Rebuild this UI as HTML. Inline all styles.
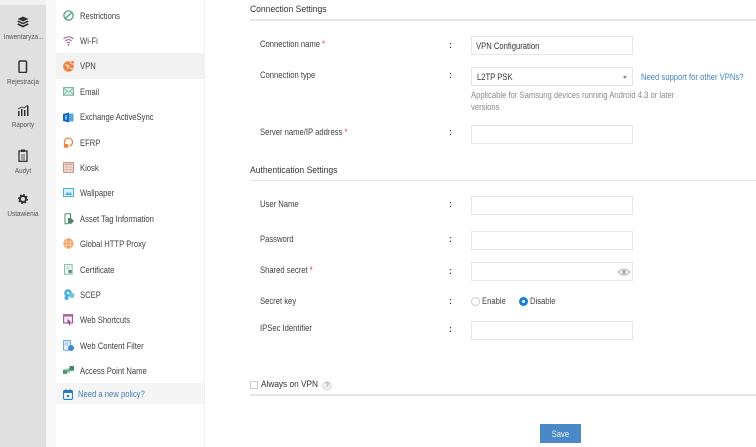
<!DOCTYPE html>
<html><head><meta charset="utf-8"><style>
html,body{margin:0;padding:0;background:#fff}
#p{position:relative;width:756px;height:447px;overflow:hidden;background:#fff;font-family:"Liberation Sans",sans-serif;color:#444;font-size:9px}
#p div,#p svg{position:absolute}
#p svg{filter:blur(.3px)}
.t{white-space:nowrap;line-height:12px;filter:blur(.3px);transform:scaleX(.85);transform-origin:0 50%}
.s{width:46px;left:0;text-align:center;font-size:7.600px;color:#555;line-height:10px;white-space:nowrap;filter:blur(.3px);transform:scaleX(.84)}
.m{left:80px;color:#3f3f3f}
.l{left:260px;color:#3f3f3f}
.c{left:449px;color:#444;font-weight:bold;transform:none}
.i{left:471px;width:160px;height:17px;border:1px solid #e6e6e6;background:#fff}
.h{left:250px;color:#333;font-size:9.500px;transform:scaleX(.9)}
.r{color:#e33}
.hr{left:250px;width:506px;height:1px;background:#e6e6e6}
</style></head><body><div id="p">
<div style="left:0;top:0;width:46px;height:447px;background:#e0e0e0"></div>
<div style="left:0;top:0;width:46px;height:5px;background:#f1f1f1"></div>
<div style="left:46px;top:0;width:10px;height:447px;background:#f8f8f8"></div>
<div style="left:204px;top:0;width:1px;height:447px;background:#efefef"></div>
<div style="left:56px;top:53px;width:148px;height:26px;background:#f2f2f2"></div>
<div style="left:56px;top:383px;width:148px;height:21px;background:#f5f5f5"></div>

<svg style="left:17px;top:16px" width="12" height="12" viewBox="0 0 12 12"><path d="M6 .5 11.500 3 6 5.500 .5 3Z M1.200 4.500 6 6.700l4.800-2.200 1 1.300L6 8.400.2 5.800Z M1.200 7.300 6 9.500l4.800-2.200 1 1.300L6 11.500.2 8.600Z" fill="#333"/></svg>
<div class="s" style="top:32px">Inwentaryza...</div>
<svg style="left:18px;top:60px" width="10" height="13" viewBox="0 0 10 13"><rect x="1" y="1" width="7.500" height="11.500" rx="1.200" fill="none" stroke="#333" stroke-width="1.500"/></svg>
<div class="s" style="top:77px">Rejestracja</div>
<svg style="left:17px;top:105px" width="12" height="11" viewBox="0 0 12 11"><path d="M1 11V6h1.500v5ZM4 11V4h1.500v7ZM7 11V5h1.500v6ZM10 11V1h1.500v10Z" fill="#333"/><path d="M1 4 5 2l2 1 4-3" fill="none" stroke="#333" stroke-width=".8"/></svg>
<div class="s" style="top:120px">Raporty</div>
<svg style="left:18px;top:149px" width="10" height="13" viewBox="0 0 10 13"><rect x="1" y="2" width="8" height="10.300" fill="none" stroke="#333" stroke-width="1.300"/><rect x="3" y=".5" width="4" height="2.500" fill="#333"/><path d="M3 6h4M3 8h4M3 10h4" stroke="#333" stroke-width=".8"/></svg>
<div class="s" style="top:166px">Audyt</div>
<svg style="left:18px;top:194px" width="10" height="10" viewBox="0 0 10 10"><circle cx="5" cy="5" r="3" fill="none" stroke="#333" stroke-width="2"/><circle cx="5" cy="5" r="4.400" fill="none" stroke="#333" stroke-width="1.200" stroke-dasharray="1.700 1.760"/></svg>
<div class="s" style="top:209px">Ustawienia</div>

<svg style="left:63px;top:10px" width="11" height="11" viewBox="0 0 11 11"><circle cx="5.500" cy="5.500" r="4.600" fill="none" stroke="#4fa27c" stroke-width="1.300"/><path d="M2.500 8.500 8.500 2.500" stroke="#4fa27c" stroke-width="1.300"/></svg>
<div class="t m" style="top:10px">Restrictions</div>
<svg style="left:63px;top:36px" width="11" height="10" viewBox="0 0 11 10"><path d="M.5 3a7 7 0 0 1 10 0M2.300 5a4.500 4.500 0 0 1 6.400 0M4 7a2.200 2.200 0 0 1 3 0" fill="none" stroke="#9a5a96" stroke-width="1"/><circle cx="5.500" cy="8.800" r=".9" fill="#9a5a96"/></svg>
<div class="t m" style="top:35px">Wi-Fi</div>
<svg style="left:63px;top:60px" width="12" height="12" viewBox="0 0 12 12"><circle cx="5.500" cy="6.500" r="5.300" fill="#ee8344"/><path d="M2.500 4.500 5.500 6 4.500 8.500M7.500 8l2 1" stroke="#fff" stroke-width="1.100" fill="none"/><circle cx="9.500" cy="2.300" r="1.800" fill="#ee8344" stroke="#fff" stroke-width=".6"/></svg>
<div class="t m" style="top:60px">VPN</div>
<svg style="left:63px;top:87px" width="11" height="9" viewBox="0 0 11 9"><rect x=".6" y=".6" width="9.800" height="7.600" fill="#dceee6" stroke="#6fb398"/><path d="M1 1.500 5.500 5 10 1.500M1 7.500 4 4M10 7.500 7 4" stroke="#6fb398" stroke-width=".7" fill="none"/></svg>
<div class="t m" style="top:86px">Email</div>
<svg style="left:63px;top:112px" width="11" height="11" viewBox="0 0 11 11"><rect x="4" y="1.500" width="6.500" height="8" fill="#5aa5e0"/><path d="M0 2 6 .5v10L0 9Z" fill="#0f6cbd"/><path d="M2 4h2M2 5.500h2M2 7h2" stroke="#fff" stroke-width=".8"/></svg>
<div class="t m" style="top:111px">Exchange ActiveSync</div>
<svg style="left:63px;top:137px" width="11" height="12" viewBox="0 0 11 12"><path d="M1.500 7V5a4 4 0 0 1 8 0c0 2-1 3.500-3 4" fill="none" stroke="#ee8344" stroke-width="1.300"/><rect x=".8" y="7" width="4.400" height="3.800" rx=".6" fill="#ee8344"/></svg>
<div class="t m" style="top:137px">EFRP</div>
<svg style="left:63px;top:162px" width="11" height="11" viewBox="0 0 11 11"><rect x=".6" y=".6" width="9.800" height="9.800" fill="#f0dcd5" stroke="#c48a7a"/><path d="M2 2.500h7M2.500 5h2.500M6 5h2.500M2.500 7.500h2.500M6 7.500h2.500" stroke="#cf9c8e" stroke-width="1"/></svg>
<div class="t m" style="top:162px">Kiosk</div>
<svg style="left:63px;top:188px" width="11" height="9" viewBox="0 0 11 9"><rect x=".5" y=".5" width="10" height="8" fill="#dbf0fa" stroke="#3fb0e2"/><path d="M2 7 4.500 4 6 5.500 7.500 4 9 7Z" fill="#3fb0e2"/></svg>
<div class="t m" style="top:187px">Wallpaper</div>
<svg style="left:63px;top:213px" width="12" height="12" viewBox="0 0 12 12"><path d="M2 .8h5.500v5M2 .8v10h3" fill="none" stroke="#4f8a68" stroke-width="1"/><path d="M5 5h3l3 3-2.500 2.800H5Z" fill="#4f8a68"/></svg>
<div class="t m" style="top:213px">Asset Tag Information</div>
<svg style="left:63px;top:238px" width="11" height="11" viewBox="0 0 11 11"><circle cx="5.500" cy="5.500" r="5.200" fill="#f39a5e"/><path d="M.5 4h10M.5 7h10M3.700 .8v9.400M7.300 .8v9.400" stroke="#fff" stroke-width=".5"/></svg>
<div class="t m" style="top:238px">Global HTTP Proxy</div>
<svg style="left:64px;top:264px" width="10" height="11" viewBox="0 0 10 11"><path d="M.6.6h7.500v9.500H.6Z" fill="none" stroke="#7db9a0"/><path d="M2 3h4.500M2 5h3" stroke="#7db9a0" stroke-width=".8"/><circle cx="6" cy="7.500" r="1.800" fill="#3d9a72"/></svg>
<div class="t m" style="top:264px">Certificate</div>
<svg style="left:63px;top:289px" width="12" height="12" viewBox="0 0 12 12"><circle cx="5" cy="4" r="3.800" fill="#43aee0"/><circle cx="9" cy="6.500" r="2.600" fill="#7cc8ea"/><circle cx="3.500" cy="9" r="2" fill="#43aee0"/><circle cx="5" cy="4" r="1.400" fill="#fff"/></svg>
<div class="t m" style="top:289px">SCEP</div>
<svg style="left:63px;top:314px" width="11" height="12" viewBox="0 0 11 12"><rect x=".6" y=".6" width="9" height="8.400" fill="#f3e8f2" stroke="#8f4f8c"/><rect x=".6" y=".6" width="9" height="2" fill="#a9709f"/><path d="M4.500 5 8 8l-1.500.2L7.500 11l-1 .5-1-2.500L4.500 10Z" fill="#8f4f8c"/></svg>
<div class="t m" style="top:314px">Web Shortcuts</div>
<svg style="left:63px;top:340px" width="12" height="12" viewBox="0 0 12 12"><path d="M.6.6h7v9.500H.6Z" fill="#eaf3fb" stroke="#6aa5d8"/><path d="M2 3h4M2 5h3" stroke="#6aa5d8" stroke-width=".8"/><circle cx="8" cy="8" r="3" fill="#3b8ad6"/></svg>
<div class="t m" style="top:340px">Web Content Filter</div>
<svg style="left:63px;top:366px" width="11" height="9" viewBox="0 0 11 9"><rect x="0" y="3.500" width="4.200" height="4.500" rx=".8" fill="#4a9a72"/><rect x="4" y="2.500" width="3" height="4" fill="#7cb89a"/><rect x="6.500" y="0" width="4.500" height="4.700" rx=".8" fill="#3f8a64"/></svg>
<div class="t m" style="top:365px">Access Point Name</div>
<svg style="left:63px;top:389px" width="10" height="11" viewBox="0 0 10 11"><rect x=".6" y="1.600" width="8.800" height="8.800" rx="1" fill="#fff" stroke="#2a78bd" stroke-width="1.100"/><rect x=".6" y="1.600" width="8.800" height="2.400" fill="#2a78bd"/><path d="M2.800 0v2.500M7.200 0v2.500" stroke="#2a78bd"/><circle cx="5" cy="7" r="1.300" fill="#2a78bd"/></svg>
<div class="t" style="left:78px;top:388px;color:#3f7fb8">Need a new policy?</div>

<div class="t h" style="top:4px">Connection Settings</div>
<div class="hr" style="top:19px;height:2px"></div>
<div class="t l" style="top:38px">Connection name <span class="r">*</span></div><div class="t c" style="top:39px">:</div>
<div class="i" style="top:36px"></div><div class="t" style="left:476px;top:40px;color:#333">VPN Configuration</div>
<div class="t l" style="top:69px">Connection type</div><div class="t c" style="top:69px">:</div>
<div class="i" style="top:67px"></div><div class="t" style="left:477px;top:71px;color:#333">L2TP PSK</div>
<div style="left:623px;top:76px;width:0;height:0;border-left:2.500px solid transparent;border-right:2.500px solid transparent;border-top:3px solid #888"></div>
<div class="t" style="left:641px;top:71px;color:#3f86c0">Need support for other VPNs?</div>
<div class="t" style="left:471px;top:89px;color:#8a8a8a">Applicable for Samsung devices running Android 4.3 or later</div>
<div class="t" style="left:471px;top:101px;color:#8a8a8a">versions</div>
<div class="t l" style="top:126px">Server name/IP address <span class="r">*</span></div><div class="t c" style="top:126px">:</div>
<div class="i" style="top:125px"></div>

<div class="t h" style="top:165px">Authentication Settings</div>
<div class="hr" style="top:180px"></div>
<div class="t l" style="top:198px">User Name</div><div class="t c" style="top:198px">:</div>
<div class="i" style="top:196px"></div>
<div class="t l" style="top:233px">Password</div><div class="t c" style="top:233px">:</div>
<div class="i" style="top:231px"></div>
<div class="t l" style="top:264px">Shared secret <span class="r">*</span></div><div class="t c" style="top:265px">:</div>
<div class="i" style="top:262px"></div>
<svg style="left:618px;top:268px" width="12" height="8" viewBox="0 0 12 8"><path d="M.5 4Q6-2 11.500 4 6 10 .5 4Z" fill="none" stroke="#aaa"/><circle cx="6" cy="4" r="2" fill="#aaa"/></svg>
<div class="t l" style="top:295px">Secret key</div><div class="t c" style="top:295px">:</div>
<div style="left:471px;top:297px;width:7px;height:7px;border:1px solid #ccc;border-radius:50%"></div>
<div class="t" style="left:482px;top:295px">Enable</div>
<div style="left:519px;top:297px;width:9px;height:9px;background:#1a7fd8;border-radius:50%"></div>
<div style="left:522px;top:300px;width:3px;height:3px;background:#fff;border-radius:50%"></div>
<div class="t" style="left:530px;top:295px">Disable</div>
<div class="t l" style="top:322px">IPSec Identifier</div><div class="t c" style="top:323px">:</div>
<div class="i" style="top:321px"></div>

<div style="left:250px;top:381px;width:6px;height:6px;border:1px solid #ccc;border-radius:1px"></div>
<div class="t" style="left:261px;top:379px;font-size:9.500px;color:#333;transform:scaleX(.87)">Always on VPN</div>
<div style="left:322px;top:381px;width:8px;height:8px;background:#eee;border:1px solid #ddd;border-radius:50%;font-size:6.500px;line-height:8px;text-align:center;color:#777">?</div>
<div class="hr" style="top:394px;height:2px"></div>
<div style="left:540px;top:424px;width:41px;height:19px;background:#4a89c6"></div>
<div class="t" style="left:540px;top:428px;width:48px;text-align:center;color:#eef">Save</div>
</div></body></html>
